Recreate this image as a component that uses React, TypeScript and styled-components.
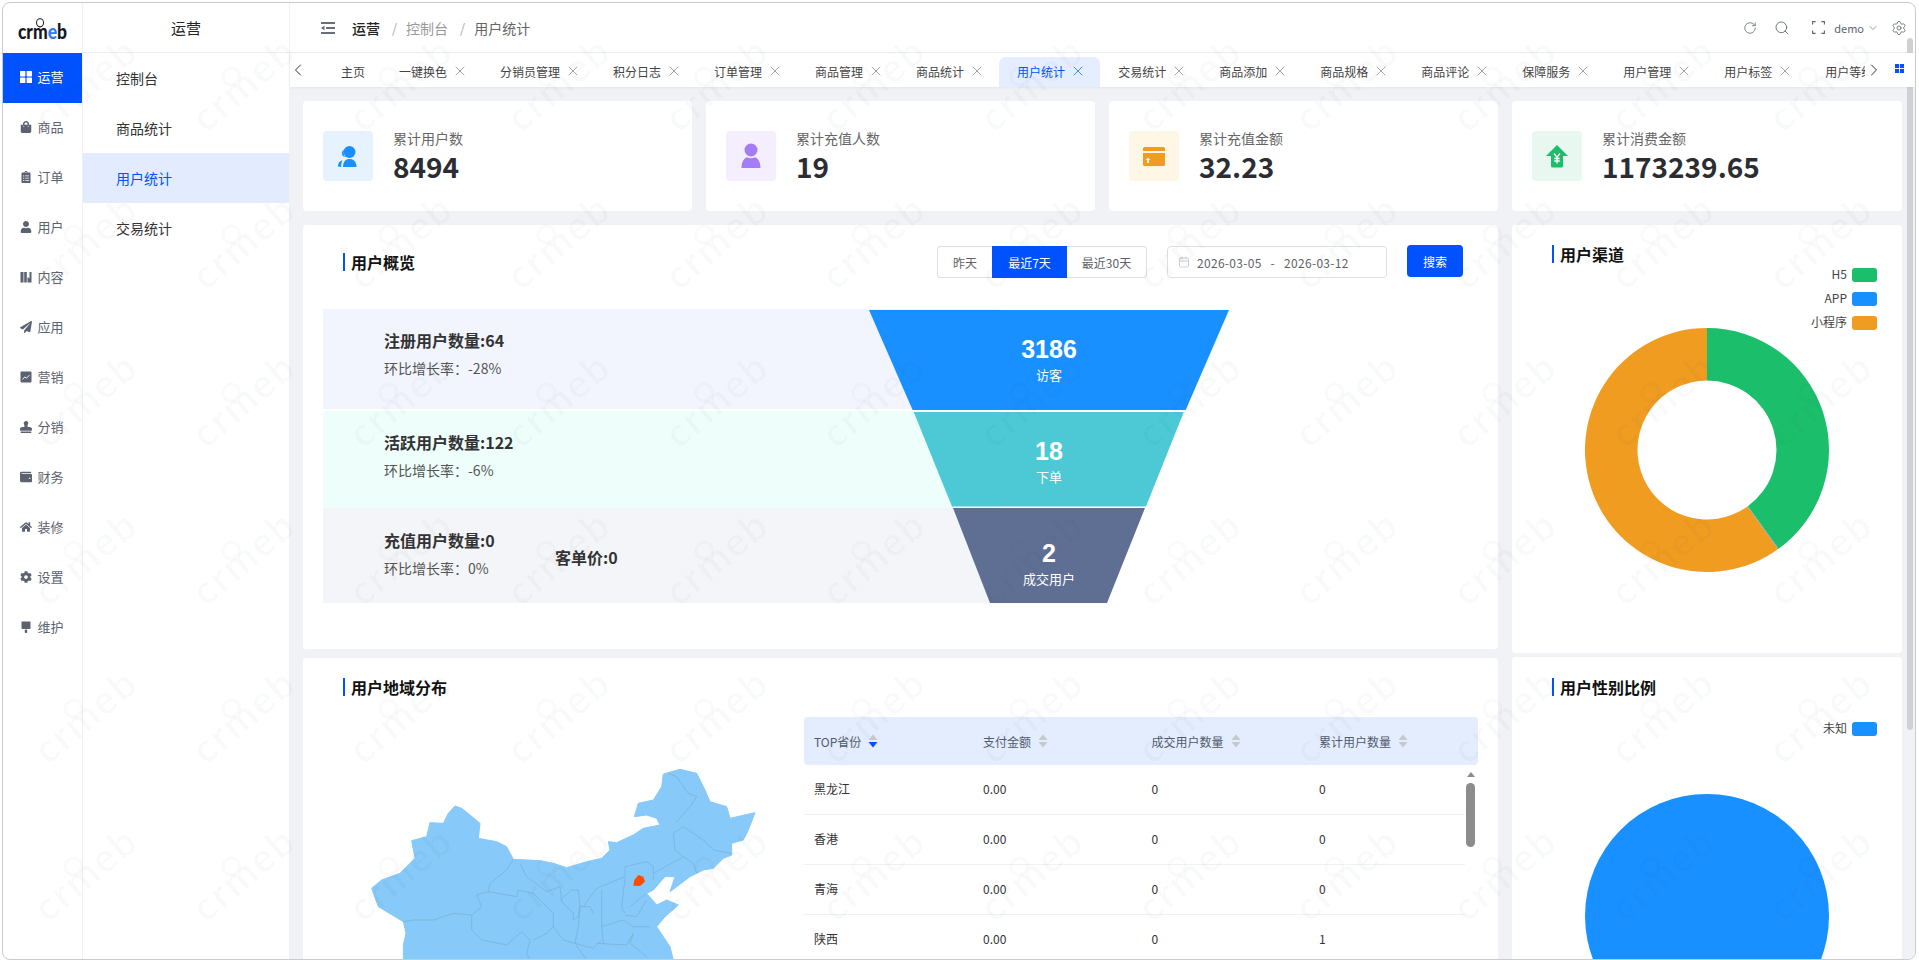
import React from 'react';
import styled, { createGlobalStyle } from 'styled-components';
import { RotateCw, Search, ChevronDown, ChevronLeft, ChevronRight, Settings, X, Calendar } from 'lucide-react';
import { FaShoppingBag, FaClipboardList, FaUser, FaPaperPlane, FaStamp, FaWallet, FaHome, FaCog } from 'react-icons/fa';

const Global = createGlobalStyle`
  html, body { margin: 0; padding: 0; height: 100%; overflow: hidden; background: #fff; }
  body { font-family: "Noto Sans CJK SC", "Noto Sans", sans-serif; color: #333; }
  * { box-sizing: border-box; }
`;

const PRIMARY = '#0052ff';

const Frame = styled.div`
  position: relative;
  display: flex;
  width: 1914px;
  height: 958px;
  margin: 2px 0 0 2px;
  border: 1px solid #c9cbce;
  border-radius: 8px;
  overflow: hidden;
  background: #fff;
`;
const Sidebar = styled.nav`
  flex: none;
  width: 80px;
  border-right: 1px solid #f0f1f3;
`;
const LogoBox = styled.div`
  height: 50px;
  display: flex;
  align-items: flex-end;
  justify-content: center;
  padding-bottom: 10px;
`;
const LogoWord = styled.div`
  font-family: "Lato", sans-serif;
  font-weight: 900;
  font-size: 17.5px;
  line-height: 22px;
  color: #16181d;
  transform: scaleY(1.15);
`;
const LogoE = styled.span`
  color: #2f7bef;
`;
const RingM = styled.span`
  position: relative;
  display: inline-block;
  &::before {
    content: '';
    position: absolute;
    left: 50%;
    top: -0.06em;
    width: 0.34em;
    height: 0.34em;
    border: 0.09em solid currentColor;
    border-radius: 50%;
    transform: translateX(-50%);
  }
`;
const NavItem = styled.div<{ $active?: boolean }>`
  height: 50px;
  display: flex;
  align-items: center;
  justify-content: center;
  gap: 5px;
  font-size: 13px;
  padding: 0 1px 3px 0;
  color: ${(p) => (p.$active ? '#fff' : '#5c6370')};
  background: ${(p) => (p.$active ? PRIMARY : 'transparent')};
  svg { width: 12px; height: 12px; flex: none; }
`;
const SubMenu = styled.aside`
  flex: none;
  width: 207px;
  border-right: 1px solid #f0f1f3;
`;
const SubHead = styled.div`
  height: 50px;
  display: flex;
  align-items: center;
  justify-content: center;
  font-size: 15px;
  color: #222;
  border-bottom: 1px solid #eeeff1;
`;
const SubItem = styled.div<{ $active?: boolean }>`
  height: 50px;
  display: flex;
  align-items: center;
  padding-left: 33px;
  font-size: 14px;
  color: ${(p) => (p.$active ? PRIMARY : '#333')};
  background: ${(p) => (p.$active ? '#e2ecfe' : 'transparent')};
`;
const Main = styled.main`
  flex: 1;
  min-width: 0;
  display: flex;
  flex-direction: column;
  position: relative;
`;
const TopBar = styled.header`
  flex: none;
  height: 50px;
  display: flex;
  align-items: center;
  padding: 0 8px 0 31px;
  border-bottom: 1px solid #eeeff1;
`;
const Crumb = styled.span<{ $tone: 'strong' | 'mid' | 'light' }>`
  font-size: 14px;
  font-weight: ${(p) => (p.$tone === 'strong' ? 500 : 400)};
  color: ${(p) => (p.$tone === 'strong' ? '#222' : p.$tone === 'mid' ? '#666' : '#999')};
`;
const CrumbSep = styled.span`
  font-size: 13px;
  color: #aaa;
  margin: 0 9px 0 12px;
`;
const TopRight = styled.div`
  margin-left: auto;
  display: flex;
  align-items: center;
  color: #5c6370;
  font-size: 11px;
`;
const TopSlot = styled.span<{ $ml: number }>`
  display: flex;
  align-items: center;
  margin-left: ${(p) => p.$ml}px;
`;
const TabsBar = styled.div`
  flex: none;
  height: 34px;
  display: flex;
  position: relative;
  z-index: 1;
  background: #fff;
  box-shadow: 0 1px 3px rgba(0, 0, 0, 0.05);
`;
const TabArrow = styled.div`
  flex: none;
  width: 33px;
  padding-top: 7px;
  color: #333;
  svg { margin-left: -2px; }
`;
const TabStrip = styled.div`
  flex: 1;
  min-width: 0;
  display: flex;
  overflow: hidden;
`;
const Tab = styled.div<{ $active?: boolean; $plain?: boolean }>`
  flex: none;
  position: relative;
  height: 30px;
  margin-top: 4px;
  padding: 0 ${(p) => (p.$plain ? 16 : 18)}px 2px 18px;
  display: flex;
  align-items: center;
  gap: 9px;
  font-size: 12px;
  white-space: nowrap;
  color: ${(p) => (p.$active ? PRIMARY : '#444')};
  background: ${(p) => (p.$active ? '#e4eefe' : 'transparent')};
  border-radius: 7px 7px 0 0;
  svg { color: ${(p) => (p.$active ? PRIMARY : '#777')}; flex: none; margin: 0 -4px; }
`;
const TabEnd = styled.div`
  flex: none;
  width: 50px;
  display: flex;
  color: #333;
`;
const EndChevron = styled.span`
  display: block;
  margin: 7px 0 0 -1px;
`;
const GridMark = styled.svg`
  margin: 11px 0 0 11px;
`;
const Content = styled.div`
  flex: 1;
  min-height: 0;
  overflow: hidden;
  padding: 14px 13px 0 13px;
  background: #f0f2f5;
`;
const StatRow = styled.section`
  display: grid;
  grid-template-columns: 389px 389px 389px 390px;
  gap: 14px;
  margin-bottom: 14px;
`;
const StatCard = styled.div`
  height: 110px;
  background: #fff;
  border-radius: 4px;
  padding: 30px 20px;
  display: flex;
  gap: 20px;
`;
const StatIcon = styled.div<{ $bg: string }>`
  width: 50px;
  height: 50px;
  flex: none;
  border-radius: 4px;
  background: ${(p) => p.$bg};
  display: flex;
  align-items: center;
  justify-content: center;
`;
const StatText = styled.div`
  margin-top: -1px;
`;
const StatLabel = styled.div`
  font-size: 14px;
  line-height: 16px;
  color: #666;
`;
const StatValue = styled.div`
  font-size: 28px;
  font-weight: 700;
  line-height: 30px;
  margin-top: 5px;
  color: #2b2d33;
`;
const Columns = styled.div`
  display: grid;
  grid-template-columns: 1195px 390px;
  gap: 14px;
`;
const Column = styled.div<{ $gap: number }>`
  display: flex;
  flex-direction: column;
  gap: ${(p) => p.$gap}px;
`;
const Card = styled.section<{ $h: number }>`
  height: ${(p) => p.$h}px;
  background: #fff;
  border-radius: 4px;
`;
const OverviewCard = styled(Card)`
  padding: 21px 20px 0;
`;
const OverviewHead = styled.div`
  height: 32px;
  display: flex;
  align-items: center;
  padding: 0 15px 0 20px;
`;
const SectionTitle = styled.h2`
  margin: 0;
  height: 18px;
  padding-left: 6px;
  border-left: 2px solid ${PRIMARY};
  font-size: 16px;
  line-height: 18px;
  font-weight: 700;
  color: #111;
`;
const RangeGroup = styled.div`
  margin-left: auto;
  display: flex;
`;
const RangeBtn = styled.div<{ $active?: boolean; $w: number }>`
  width: ${(p) => p.$w}px;
  height: 32px;
  display: flex;
  align-items: center;
  justify-content: center;
  font-size: 12px;
  color: ${(p) => (p.$active ? '#fff' : '#606266')};
  background: ${(p) => (p.$active ? PRIMARY : '#fff')};
  border: 1px solid ${(p) => (p.$active ? PRIMARY : '#dcdfe6')};
  &:first-child { border-radius: 4px 0 0 4px; border-right: 0; }
  &:last-child { border-radius: 0 4px 4px 0; border-left: 0; }
`;
const DateBox = styled.div`
  margin-left: 20px;
  width: 220px;
  height: 32px;
  border: 1px solid #dcdfe6;
  border-radius: 4px;
  display: flex;
  align-items: center;
  padding-left: 10px;
  font-size: 12px;
  letter-spacing: 0.3px;
  color: #606266;
  svg { color: #b4b8bf; }
`;
const DateText = styled.span<{ $ml: number }>`
  margin-left: ${(p) => p.$ml}px;
`;
const SearchBtn = styled.div`
  margin-left: 20px;
  width: 56px;
  height: 32px;
  margin-top: -2px;
  border-radius: 4px;
  display: flex;
  align-items: center;
  justify-content: center;
  font-size: 12px;
  color: #fff;
  background: ${PRIMARY};
`;
const Funnel = styled.div`
  position: relative;
  margin-top: 31px;
`;
const FunnelRow = styled.div<{ $bg: string; $h: number; $mb?: number; $pt?: number }>`
  width: 677px;
  height: ${(p) => p.$h}px;
  margin-bottom: ${(p) => p.$mb ?? 0}px;
  padding: ${(p) => p.$pt ?? 20}px 0 0 61px;
  background: ${(p) => p.$bg};
  display: flex;
`;
const FunnelText = styled.div`
  width: 171px;
  flex: none;
`;
const FunnelTitle = styled.div`
  font-size: 16px;
  line-height: 22px;
  font-weight: 700;
  color: #333;
  white-space: nowrap;
`;
const FunnelSub = styled.div`
  font-size: 14px;
  line-height: 20px;
  margin-top: 7px;
  color: #555;
  white-space: nowrap;
`;
const UnitPrice = styled(FunnelTitle)`
  margin-top: 17px;
`;
const FunnelStack = styled.div`
  position: absolute;
  top: 1px;
  left: 546px;
  width: 360px;
  display: flex;
  flex-direction: column;
`;
const Slice = styled.div<{ $bg: string; $h: number; $pt: number; $clip: string; $mb: number }>`
  height: ${(p) => p.$h}px;
  padding-top: ${(p) => p.$pt}px;
  margin-bottom: ${(p) => p.$mb}px;
  background: ${(p) => p.$bg};
  clip-path: polygon(${(p) => p.$clip});
  display: flex;
  flex-direction: column;
  align-items: center;
  color: #fff;
`;
const SliceNum = styled.div`
  font-family: "Liberation Sans", Arial, sans-serif;
  font-weight: 700;
  font-size: 25px;
  line-height: 28px;
`;
const SliceLabel = styled.div`
  font-size: 13px;
  line-height: 18px;
  margin-top: 3px;
`;
const SideCard = styled(Card)<{ $pt: number }>`
  padding-top: ${(p) => p.$pt}px;
`;
const SideTitleRow = styled.div`
  display: flex;
  padding-left: 40px;
`;
const Legend = styled.div<{ $mt: number }>`
  display: flex;
  flex-direction: column;
  align-items: flex-end;
  gap: 10px;
  padding-right: 25px;
  margin-top: ${(p) => p.$mt}px;
`;
const LegendRow = styled.div`
  height: 14px;
  display: flex;
  align-items: center;
  gap: 5px;
  font-size: 12px;
  color: #444;
`;
const LegendName = styled.span`
  margin-top: -3px;
`;
const Swatch = styled.span<{ $c: string }>`
  width: 25px;
  height: 14px;
  border-radius: 3px;
  background: ${(p) => p.$c};
`;
const Chart = styled.svg<{ $mt: number }>`
  display: block;
  margin: ${(p) => p.$mt}px auto 0;
`;
const RegionCard = styled(Card)`
  padding: 20px 20px 0;
`;
const RegionTitleRow = styled.div`
  display: flex;
  padding-left: 20px;
`;
const RegionBody = styled.div`
  display: flex;
  margin-top: 21px;
`;
const MapArt = styled.svg`
  display: block;
  width: 481px;
  height: 243px;
  flex: none;
`;
const TableWrap = styled.div`
  position: relative;
  width: 674px;
  flex: none;
`;
const TableHead = styled.div`
  display: grid;
  grid-template-columns: 169px 168.5px 167.5px 169px;
  height: 48px;
  border-radius: 4px;
  background: #e3edfd;
  font-size: 12px;
  color: #515a6e;
`;
const HeadCell = styled.div`
  display: flex;
  align-items: center;
  gap: 7px;
  padding-left: 10px;
`;
const TableRow = styled.div`
  display: grid;
  grid-template-columns: 169px 168.5px 167.5px 156px;
  width: 661px;
  height: 50px;
  align-items: center;
  border-bottom: 1px solid #f0f1f3;
  font-size: 12px;
  color: #333;
`;
const BodyCell = styled.div`
  padding: 0 0 2px 10px;
`;
const MiniArrow = styled.div`
  position: absolute;
  left: 663px;
  top: 55px;
  width: 0;
  height: 0;
  border-left: 4px solid transparent;
  border-right: 4px solid transparent;
  border-bottom: 5px solid #8c8c8c;
`;
const MiniThumb = styled.div`
  position: absolute;
  left: 662px;
  top: 66px;
  width: 9px;
  height: 64px;
  border-radius: 5px;
  background: #8c8c8c;
`;
const PageThumb = styled.div`
  position: absolute;
  right: 2px;
  top: 35px;
  width: 6px;
  height: 692px;
  border-radius: 3px;
  background: #cfd1d4;
`;
const Watermarks = styled.div`
  position: absolute;
  inset: 0;
  z-index: 5;
  pointer-events: none;
  padding: 1px 0 0 3px;
  display: grid;
  grid-template-columns: repeat(12, 157.7px);
  grid-auto-rows: 158px;
  overflow: hidden;
`;
const WaterCell = styled.div`
  display: flex;
  align-items: center;
  justify-content: center;
`;
const WaterWord = styled.div`
  font-family: "Lato", sans-serif;
  font-weight: 700;
  font-size: 40px;
  line-height: 40px;
  letter-spacing: 2px;
  color: rgba(60, 70, 85, 0.028);
  transform: rotate(-40deg);
  white-space: nowrap;
`;

const Squares = ({ size = 12, color = 'currentColor' }: { size?: number; color?: string }) => (
  <svg viewBox="0 0 12 12" width={size} height={size} fill={color}>
    <rect x="0" y="0" width="5.4" height="5.4" rx="0.6" />
    <rect x="6.6" y="0" width="5.4" height="5.4" rx="0.6" />
    <rect x="0" y="6.6" width="5.4" height="5.4" rx="0.6" />
    <rect x="6.6" y="6.6" width="5.4" height="5.4" rx="0.6" />
  </svg>
);
const Books = () => (
  <svg viewBox="0 0 12 12" fill="currentColor">
    <rect x="0.5" y="1" width="3" height="10.5" />
    <rect x="4.2" y="1" width="2.6" height="10.5" />
    <path d="M7.5 1h4v10.5h-4V6l2 1.4V1z" />
  </svg>
);
const ChartBox = () => (
  <svg viewBox="0 0 12 12">
    <rect x="0.5" y="0.5" width="11" height="11" rx="1" fill="currentColor" />
    <path d="M2.4 8.4 4.8 6l1.6 1.2 3-3" fill="none" stroke="#fff" strokeWidth="1" />
  </svg>
);
const Brush = () => (
  <svg viewBox="0 0 12 12" fill="currentColor">
    <path d="M1.5 0.5h9v6.4a1 1 0 0 1-1 1h-7a1 1 0 0 1-1-1z" />
    <rect x="4.8" y="8.4" width="2.4" height="3.6" rx="0.8" />
  </svg>
);
const Hamburger = () => (
  <svg width="14" height="12" viewBox="0 0 14 12" fill="#6b6f76">
    <rect x="0" y="0" width="14" height="2" />
    <rect x="5" y="5" width="9" height="2" />
    <rect x="0" y="10" width="14" height="2" />
    <path d="M0 6l3.5-2.4v4.8z" />
  </svg>
);
const Fullscreen = () => (
  <svg width="13" height="13" viewBox="0 0 13 13" fill="none" stroke="currentColor" strokeWidth="1.1">
    <path d="M0.6 3.6V0.6h3M9.4 0.6h3v3M12.4 9.4v3h-3M3.6 12.4h-3v-3" />
  </svg>
);
const UsersIcon = () => (
  <svg width="24" height="24" viewBox="0 0 24 24" fill="#1890ff">
    <circle cx="13.5" cy="8" r="6" />
    <path d="M6 10.5a4.6 4.6 0 0 1 2.3-5 7.6 7.6 0 0 0 .8 7.4c-1.400 0-2.500-.9-3.100-2.400z" />
    <path d="M7 23c0-5.500 2.700-8 6.500-8s7 2.500 7 8z" />
    <path d="M2 22.500c0-3.400 1.700-5.700 4.500-6.200-.900 1.700-1.300 3.900-1.300 6.700z" />
  </svg>
);
const PersonIcon = () => (
  <svg width="20" height="26" viewBox="0 0 20 26" fill="#a47cf5">
    <circle cx="10" cy="7" r="6.500" />
    <path d="M0.500 25c0-6 2.500-9.800 5.500-10.800 2.500 1.300 5.500 1.300 8 0 3 1 5.500 4.800 5.500 10.800z" />
  </svg>
);
const CardIcon = () => (
  <svg width="22" height="19" viewBox="0 0 22 19" fill="#ef9c20">
    <path d="M1.500 0h19a1.500 1.500 0 0 1 1.500 1.500V4H0V1.500A1.500 1.500 0 0 1 1.500 0z" />
    <path d="M0 6h22v11.500a1.500 1.500 0 0 1-1.500 1.500h-19A1.500 1.500 0 0 1 0 17.500z" />
    <path d="M5 10.500l2.300 2.500H5.900v3H4.100v-3H2.700z" fill="#fff" />
  </svg>
);
const HomeArrowIcon = () => (
  <svg width="24" height="24" viewBox="0 0 24 24">
    <path d="M12 1 23 12h-5v10a1.500 1.500 0 0 1-1.500 1.500h-9A1.500 1.500 0 0 1 6 22V12H1z" fill="#1bbe6b" />
    <path d="M9 9.500l3 4 3-4M12 13.500v6M9.300 14.500h5.400M9.300 17h5.400" fill="none" stroke="#fff" strokeWidth="1.300" />
  </svg>
);
const SortMark = ({ active }: { active?: boolean }) => (
  <svg width="10" height="14" viewBox="0 0 10 14">
    <path d="M5 0.500 9.500 6h-9z" fill="#c5c8ce" />
    <path d="M5 13.500.5 8h9z" fill={active ? PRIMARY : '#c5c8ce'} />
  </svg>
);

const navItems: [string, React.ReactNode][] = [
  ['运营', <Squares key="a" />],
  ['商品', <FaShoppingBag key="b" />],
  ['订单', <FaClipboardList key="c" />],
  ['用户', <FaUser key="d" />],
  ['内容', <Books key="e" />],
  ['应用', <FaPaperPlane key="f" />],
  ['营销', <ChartBox key="g" />],
  ['分销', <FaStamp key="h" />],
  ['财务', <FaWallet key="i" />],
  ['装修', <FaHome key="j" />],
  ['设置', <FaCog key="k" />],
  ['维护', <Brush key="l" />],
];
const subItems = ['控制台', '商品统计', '用户统计', '交易统计'];
const tabs = ['一键换色', '分销员管理', '积分日志', '订单管理', '商品管理', '商品统计', '用户统计', '交易统计', '商品添加', '商品规格', '商品评论', '保障服务', '用户管理', '用户标签', '用户等级'];
const stats: [string, string, string, React.ReactNode][] = [
  ['累计用户数', '8494', '#e6f3ff', <UsersIcon key="u" />],
  ['累计充值人数', '19', '#f4eeff', <PersonIcon key="p" />],
  ['累计充值金额', '32.23', '#fff7e6', <CardIcon key="c" />],
  ['累计消费金额', '1173239.65', '#e8f8f0', <HomeArrowIcon key="h" />],
];
const tableRows = [
  ['黑龙江', '0.00', '0', '0'],
  ['香港', '0.00', '0', '0'],
  ['青海', '0.00', '0', '0'],
  ['陕西', '0.00', '0', '1'],
];
const mapOutline = '215,715 245,690 300,670 345,625 335,572 380,560 390,518 430,520 445,490 465,468 485,475 510,495 540,520 535,565 590,575 620,590 640,628 720,632 760,640 800,653 860,635 905,625 930,600 925,575 950,578 1000,555 1030,535 1080,525 1070,505 1040,495 1003,500 1015,460 1060,450 1085,410 1090,372 1140,358 1190,370 1215,420 1230,455 1280,470 1290,505 1365,488 1345,540 1330,570 1295,580 1295,615 1270,625 1240,655 1210,660 1170,680 1110,725 1125,680 1095,680 1060,720 1040,730 1070,765 1100,750 1135,765 1095,800 1070,830 1110,890 1120,930 310,930 310,885 318,850 310,815 235,770';
const mapBorders = [
  '640,628 620,660 570,700 565,725 530,735 545,770 515,795 460,790 400,810 340,810 310,815',
  '515,795 515,840 545,870 620,885 665,845 690,870 680,910 690,930',
  '565,725 650,740 655,720 700,730 760,790 760,830 740,850 700,870',
  '660,640 680,680 740,725 780,710 785,755 820,790 820,810 835,800 840,770',
  '780,750 815,720 835,720 840,770 870,770 880,790',
  '850,770 890,715 975,680 975,650 1040,635 1060,650 1060,690',
  '1060,670 1150,620 1180,640 1190,670',
  '1120,550 1150,530 1210,570 1240,600 1295,610',
  '1130,515 1170,470 1190,440 1165,430 1130,380 1105,370',
  '1120,550 1125,600 1150,620',
  '905,720 905,830 910,880',
  '975,685 965,770 975,790',
  '1040,730 990,770',
  '975,795 1010,800 1040,750',
  '905,830 970,810 1000,830 1050,830',
  '890,880 980,885 1000,850',
  '1000,850 990,880 1040,920',
  '840,770 835,830 825,880 880,895 905,870',
  '760,830 790,870 825,880 860,930',
];

const polar = (r: number, deg: number) => {
  const a = (deg * Math.PI) / 180;
  return [122 + r * Math.sin(a), 122 - r * Math.cos(a)];
};
const arc = (from: number, to: number, R = 122, r = 69.5) => {
  const [x1, y1] = polar(R, from);
  const [x2, y2] = polar(R, to);
  const [x3, y3] = polar(r, to);
  const [x4, y4] = polar(r, from);
  const large = to - from > 180 ? 1 : 0;
  return `M${x1} ${y1}A${R} ${R} 0 ${large} 1 ${x2} ${y2}L${x3} ${y3}A${r} ${r} 0 ${large} 0 ${x4} ${y4}Z`;
};

const Mark = () => (
  <>
    cr<RingM>m</RingM>eb
  </>
);

export default function App() {
  return (
    <>
      <Global />
      <Frame>
        <Sidebar>
          <LogoBox>
            <LogoWord>
              cr<RingM>m</RingM>
              <LogoE>e</LogoE>b
            </LogoWord>
          </LogoBox>
          {navItems.map(([label, icon], i) => (
            <NavItem key={label} $active={i === 0}>
              {icon}
              {label}
            </NavItem>
          ))}
        </Sidebar>
        <SubMenu>
          <SubHead>运营</SubHead>
          {subItems.map((s) => (
            <SubItem key={s} $active={s === '用户统计'}>
              {s}
            </SubItem>
          ))}
        </SubMenu>
        <Main>
          <TopBar>
            <Hamburger />
            <TopSlot $ml={17}>
              <Crumb $tone="strong">运营</Crumb>
            </TopSlot>
            <CrumbSep>/</CrumbSep>
            <Crumb $tone="light">控制台</Crumb>
            <CrumbSep>/</CrumbSep>
            <Crumb $tone="mid">用户统计</Crumb>
            <TopRight>
              <TopSlot $ml={0}>
                <RotateCw size={14} strokeWidth={1.3} />
              </TopSlot>
              <TopSlot $ml={17}>
                <Search size={16} strokeWidth={1.3} />
              </TopSlot>
              <TopSlot $ml={22}>
                <Fullscreen />
              </TopSlot>
              <TopSlot $ml={9}>demo</TopSlot>
              <TopSlot $ml={3}>
                <ChevronDown size={12} strokeWidth={1.3} />
              </TopSlot>
              <TopSlot $ml={12}>
                <Settings size={16} strokeWidth={1.2} />
              </TopSlot>
            </TopRight>
          </TopBar>
          <TabsBar>
            <TabArrow>
              <ChevronLeft size={20} strokeWidth={1.2} />
            </TabArrow>
            <TabStrip>
              <Tab $plain>主页</Tab>
              {tabs.map((t) => (
                <Tab key={t} $active={t === '用户统计'}>
                  {t}
                  <X size={16} strokeWidth={1} />
                </Tab>
              ))}
            </TabStrip>
            <TabEnd>
              <EndChevron>
                <ChevronRight size={20} strokeWidth={1.2} />
              </EndChevron>
              <GridMark width="9" height="9" viewBox="0 0 12 12" fill={PRIMARY}>
                <rect x="0" y="0" width="5.400" height="5.400" />
                <rect x="6.600" y="0" width="5.400" height="5.400" />
                <rect x="0" y="6.600" width="5.400" height="5.400" />
                <rect x="6.600" y="6.600" width="5.400" height="5.400" />
              </GridMark>
            </TabEnd>
          </TabsBar>
          <Content>
            <StatRow>
              {stats.map(([label, value, bg, icon]) => (
                <StatCard key={label}>
                  <StatIcon $bg={bg}>{icon}</StatIcon>
                  <StatText>
                    <StatLabel>{label}</StatLabel>
                    <StatValue>{value}</StatValue>
                  </StatText>
                </StatCard>
              ))}
            </StatRow>
            <Columns>
              <Column $gap={9}>
                <OverviewCard $h={424}>
                  <OverviewHead>
                    <SectionTitle>用户概览</SectionTitle>
                    <RangeGroup>
                      <RangeBtn $w={55}>昨天</RangeBtn>
                      <RangeBtn $w={75} $active>
                        最近7天
                      </RangeBtn>
                      <RangeBtn $w={80}>最近30天</RangeBtn>
                    </RangeGroup>
                    <DateBox>
                      <Calendar size={12} strokeWidth={1.3} />
                      <DateText $ml={7}>2026-03-05</DateText>
                      <DateText $ml={9}>-</DateText>
                      <DateText $ml={9}>2026-03-12</DateText>
                    </DateBox>
                    <SearchBtn>搜索</SearchBtn>
                  </OverviewHead>
                  <Funnel>
                    <FunnelRow $bg="#f2f5fe" $h={100} $mb={2}>
                      <FunnelText>
                        <FunnelTitle>注册用户数量:64</FunnelTitle>
                        <FunnelSub>环比增长率：-28%</FunnelSub>
                      </FunnelText>
                    </FunnelRow>
                    <FunnelRow $bg="#eefffb" $h={97}>
                      <FunnelText>
                        <FunnelTitle>活跃用户数量:122</FunnelTitle>
                        <FunnelSub>环比增长率：-6%</FunnelSub>
                      </FunnelText>
                    </FunnelRow>
                    <FunnelRow $bg="#f3f5f8" $h={95} $pt={21}>
                      <FunnelText>
                        <FunnelTitle>充值用户数量:0</FunnelTitle>
                        <FunnelSub>环比增长率：0%</FunnelSub>
                      </FunnelText>
                      <UnitPrice>客单价:0</UnitPrice>
                    </FunnelRow>
                    <FunnelStack>
                      <Slice $bg="#1890ff" $h={100} $pt={25} $mb={1.5} $clip="0 0, 360px 0, 316.7px 100px, 43.6px 100px">
                        <SliceNum>3186</SliceNum>
                        <SliceLabel>访客</SliceLabel>
                      </Slice>
                      <Slice $bg="#4cc9d5" $h={95} $pt={25} $mb={1.5} $clip="44.5px 0, 315px 0, 277px 95px, 83px 95px">
                        <SliceNum>18</SliceNum>
                        <SliceLabel>下单</SliceLabel>
                      </Slice>
                      <Slice $bg="#5f6f93" $h={95} $pt={31} $mb={0} $clip="84px 0, 276px 0, 238px 95px, 121px 95px">
                        <SliceNum>2</SliceNum>
                        <SliceLabel>成交用户</SliceLabel>
                      </Slice>
                    </FunnelStack>
                  </Funnel>
                </OverviewCard>
                <RegionCard $h={400}>
                  <RegionTitleRow>
                    <SectionTitle>用户地域分布</SectionTitle>
                  </RegionTitleRow>
                  <RegionBody>
                    <MapArt viewBox="69 201 1443 729">
                      <polygon points={mapOutline} fill="#87c9f8" stroke="#87c9f8" strokeWidth="3" strokeLinejoin="round" />
                      {mapBorders.map((b) => (
                        <polyline key={b} points={b} fill="none" stroke="#76a6c9" strokeWidth="1.6" strokeLinejoin="round" />
                      ))}
                      <polygon points="1000,707 1003,690 1015,675 1030,680 1035,695 1020,708" fill="#ff4d00" />
                    </MapArt>
                    <TableWrap>
                      <TableHead>
                        {['TOP省份', '支付金额', '成交用户数量', '累计用户数量'].map((h, i) => (
                          <HeadCell key={h}>
                            {h}
                            <SortMark active={i === 0} />
                          </HeadCell>
                        ))}
                      </TableHead>
                      {tableRows.map((r) => (
                        <TableRow key={r[0]}>
                          {r.map((c, i) => (
                            <BodyCell key={i}>{c}</BodyCell>
                          ))}
                        </TableRow>
                      ))}
                      <MiniArrow />
                      <MiniThumb />
                    </TableWrap>
                  </RegionBody>
                </RegionCard>
              </Column>
              <Column $gap={4}>
                <SideCard $h={428} $pt={20}>
                  <SideTitleRow>
                    <SectionTitle>用户渠道</SectionTitle>
                  </SideTitleRow>
                  <Legend $mt={5}>
                    <LegendRow>
                      <LegendName>H5</LegendName>
                      <Swatch $c="#1bbe6b" />
                    </LegendRow>
                    <LegendRow>
                      <LegendName>APP</LegendName>
                      <Swatch $c="#1890ff" />
                    </LegendRow>
                    <LegendRow>
                      <LegendName>小程序</LegendName>
                      <Swatch $c="#ef9c20" />
                    </LegendRow>
                  </Legend>
                  <Chart $mt={-2} width="244" height="244" viewBox="0 0 244 244">
                    <path d={arc(0, 144)} fill="#1bbe6b" />
                    <path d={arc(144, 144.3)} fill="#1890ff" />
                    <path d={arc(144.3, 360)} fill="#ef9c20" />
                  </Chart>
                </SideCard>
                <SideCard $h={400} $pt={21}>
                  <SideTitleRow>
                    <SectionTitle>用户性别比例</SectionTitle>
                  </SideTitleRow>
                  <Legend $mt={26}>
                    <LegendRow>
                      <LegendName>未知</LegendName>
                      <Swatch $c="#1890ff" />
                    </LegendRow>
                  </Legend>
                  <Chart $mt={58} width="244" height="244" viewBox="0 0 244 244">
                    <circle cx="122" cy="122" r="122" fill="#1890ff" />
                  </Chart>
                </SideCard>
              </Column>
            </Columns>
          </Content>
          <PageThumb />
        </Main>
        <Watermarks>
          {Array.from({ length: 72 }).map((_, i) => (
            <WaterCell key={i}>
              <WaterWord>
                <Mark />
              </WaterWord>
            </WaterCell>
          ))}
        </Watermarks>
      </Frame>
    </>
  );
}
